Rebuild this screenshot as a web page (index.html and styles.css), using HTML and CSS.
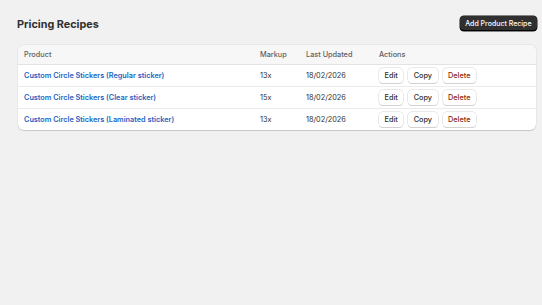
FILE: index.html
```html
<html>
<head>
	<title>Pricing Recipes</title>
	<meta name="viewport" content="width=device-width, initial-scale=1.0">
	<link rel="stylesheet" href="styles.css">
</head>
<body>
	<div class="page">
		<div class="pageHeader">
			<h1 class="pageTitle">Pricing Recipes</h1>
			<span class="primaryButton">Add Product Recipe</span>
		</div>

		<div class="card">
			<table class="recipeTable">
				<thead>
					<tr>
						<th class="colProduct">Product</th>
						<th class="colMarkup">Markup</th>
						<th class="colDate">Last Updated</th>
						<th>Actions</th>
					</tr>
				</thead>
				<tbody>
					<tr>
						<td><a class="productLink">Custom Circle Stickers (Regular sticker)</a></td>
						<td>13x</td>
						<td>18/02/2026</td>
						<td class="actions"><span class="btn">Edit</span><span class="btn">Copy</span><span class="btn danger">Delete</span></td>
					</tr>
					<tr>
						<td><a class="productLink">Custom Circle Stickers (Clear sticker)</a></td>
						<td>15x</td>
						<td>18/02/2026</td>
						<td class="actions"><span class="btn">Edit</span><span class="btn">Copy</span><span class="btn danger">Delete</span></td>
					</tr>
					<tr>
						<td><a class="productLink">Custom Circle Stickers (Laminated sticker)</a></td>
						<td>13x</td>
						<td>18/02/2026</td>
						<td class="actions"><span class="btn">Edit</span><span class="btn">Copy</span><span class="btn danger">Delete</span></td>
					</tr>
				</tbody>
			</table>
		</div>
	</div>
</body>
</html>
```

FILE: styles.css
```css
body {
	font-family: "Inter", "Liberation Sans", sans-serif;
	background-color: #f1f1f1;
	color: #303030;
	margin: 0;
}
.page {
	padding: 16px 5px 0 18px;
}
.pageHeader {
	display: flex;
	justify-content: space-between;
	align-items: center;
	height: 15px;
	margin-bottom: 14px;
}
.pageTitle {
	font-size: 10.8px;
	font-weight: 650;
	margin: 1px 0 0 -1px;
}
.primaryButton {
	background-color: #303030;
	color: #ffffff;
	font-size: 7px;
	font-weight: 550;
	height: 15px;
	line-height: 15px;
	padding: 0 5.5px;
	border-radius: 4px;
	box-shadow: inset 0 -1px 0 #000, 0 0 0 0.5px #1a1a1a;
}
.card {
	background-color: #ffffff;
	border-radius: 6px;
	box-shadow: 0 0.5px 1px rgba(0, 0, 0, 0.15), 0 0 0 0.5px rgba(0, 0, 0, 0.06);
	overflow: hidden;
	margin-right: 1px;
}
.recipeTable {
	width: 100%;
	border-collapse: collapse;
	font-size: 7.3px;
}
.recipeTable th {
	background-color: #f7f7f7;
	color: #616161;
	font-weight: 450;
	text-align: left;
	height: 19px;
	padding: 0 6px;
	border-bottom: 1px solid #e3e3e3;
}
.recipeTable td {
	height: 21px;
	padding: 0 6px;
	border-bottom: 1px solid #ebebeb;
}
.recipeTable tbody tr:last-child td {
	border-bottom: none;
}
.colProduct {
	width: 224px;
}
.colMarkup {
	width: 34px;
}
.colDate {
	width: 61px;
}
.productLink {
	color: #2463c2;
	font-weight: 600;
}
.actions {
	display: flex;
	gap: 5px;
	align-items: center;
}
.btn {
	display: inline-block;
	background-color: #ffffff;
	height: 15px;
	line-height: 15px;
	padding: 0 5.5px;
	border-radius: 4px;
	font-weight: 550;
	box-shadow: 0 0 0 0.5px #d4d4d4, 0 1px 0 #d0d0d0;
}
.danger {
	color: #8e1f0b;
}
```
